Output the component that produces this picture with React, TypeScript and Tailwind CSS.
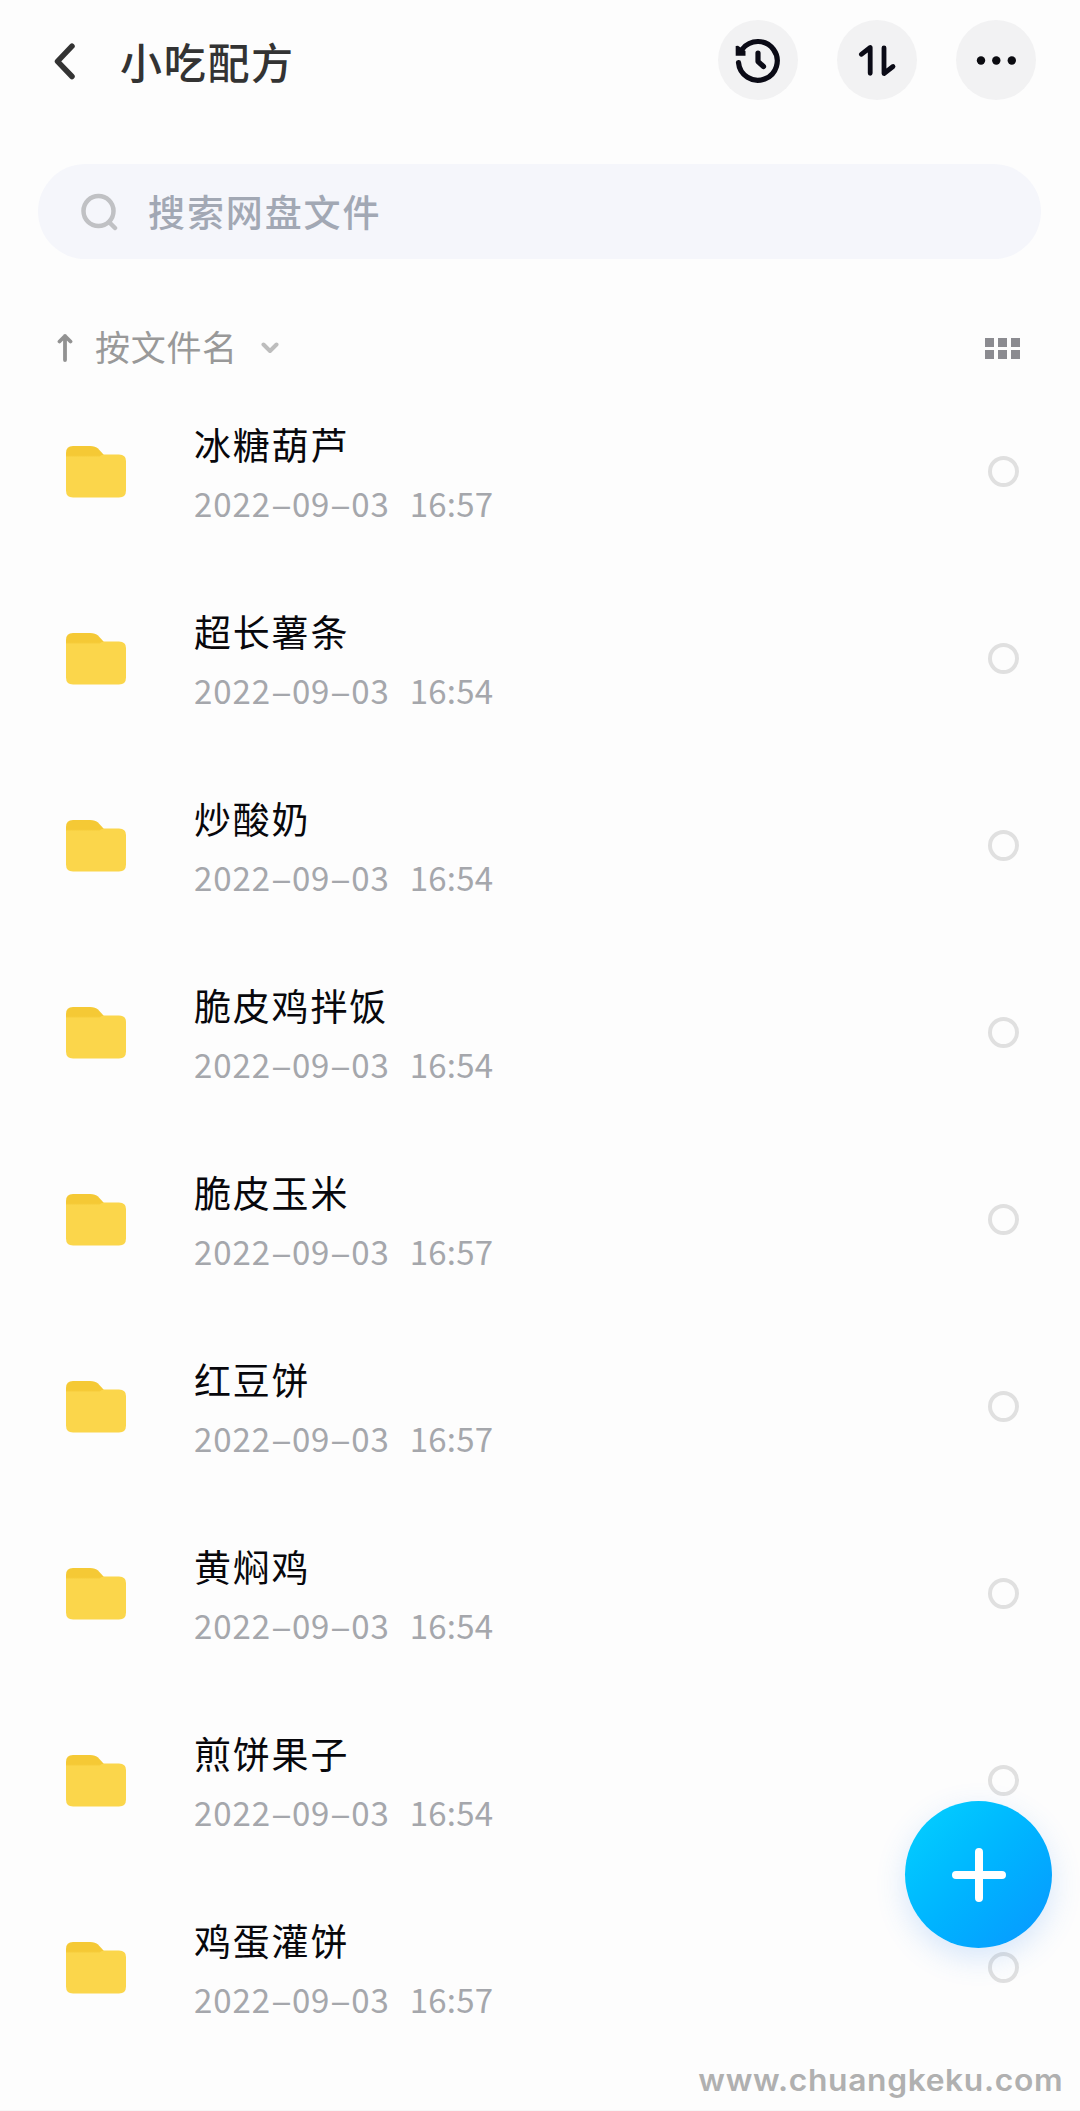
import { useState } from "react";

type FolderItem = {
    name: string;
    date: string;
    time: string;
};

const folders: FolderItem[] = [
    { name: "冰糖葫芦", date: "2022-09-03", time: "16:57" },
    { name: "超长薯条", date: "2022-09-03", time: "16:54" },
    { name: "炒酸奶", date: "2022-09-03", time: "16:54" },
    { name: "脆皮鸡拌饭", date: "2022-09-03", time: "16:54" },
    { name: "脆皮玉米", date: "2022-09-03", time: "16:57" },
    { name: "红豆饼", date: "2022-09-03", time: "16:57" },
    { name: "黄焖鸡", date: "2022-09-03", time: "16:54" },
    { name: "煎饼果子", date: "2022-09-03", time: "16:54" },
    { name: "鸡蛋灌饼", date: "2022-09-03", time: "16:57" },
];

function HistoryIcon() {
    return (
        <svg width="80" height="80" viewBox="0 0 80 80" fill="none" stroke="#0b0b16" strokeWidth="5.2" strokeLinecap="round" strokeLinejoin="round">
            <path d="M20.500 42.500A19.400 19.400 0 1 0 24.500 29" />
            <path d="M17.700 26L20 25.700L27.500 31V35.700H17.700z" fill="#0b0b16" stroke="none" />
            <path d="M40 33v8.500l5.500 5" />
        </svg>
    );
}

function TransferIcon() {
    return (
        <svg width="80" height="80" viewBox="0 0 80 80" fill="none" stroke="#0b0b16" strokeWidth="4.8" strokeLinecap="round" strokeLinejoin="round">
            <path d="M24.300 34.300L33.200 27.500V53.300" />
            <path d="M47 27.800V53.500L56 46.500" />
        </svg>
    );
}

function MoreIcon() {
    return (
        <svg width="80" height="80" viewBox="0 0 80 80" fill="#0b0b10">
            <circle cx="25" cy="40.5" r="4.2" />
            <circle cx="40.3" cy="40.5" r="4.2" />
            <circle cx="55.8" cy="40.5" r="4.2" />
        </svg>
    );
}

function FolderIcon() {
    return (
        <svg width="60" height="52" viewBox="0 0 60 52" className="shrink-0">
            <defs>
                <linearGradient id="folder-front" x1="0" y1="0" x2="0" y2="1">
                    <stop offset="0.03" stopColor="#f5c935" />
                    <stop offset="0.2" stopColor="#fbd64b" />
                </linearGradient>
            </defs>
            <path d="M0 7Q0 0 7 0H24Q29.500 0 32 2.500L38 9V22H0z" fill="#f5c935" />
            <path d="M0 9H38V20H0z" fill="url(#folder-front)" />
            <path d="M0 14H28Q31.500 14 33 11.500Q35 8.500 38 8.500H53Q60 8.500 60 15V44.500Q60 51.500 53 51.500H7Q0 51.500 0 44.500z" fill="#fbd64b" />
        </svg>
    );
}

// The dash is stretched so that it is as wide as a digit
function DateText({ date }: { date: string }) {
    return (
        <>
            {date.split("-").map((part, i) => (
                <span key={i}>
                    {i > 0 && <span className="inline-block w-[21px] origin-center scale-x-[2] text-center tracking-normal">-</span>}
                    {part}
                </span>
            ))}
        </>
    );
}

function FolderRow({ item, selected, onSelect }: { item: FolderItem; selected: boolean; onSelect: () => void }) {
    return (
        <li className="flex h-[187px] items-center pr-[61px] pl-[66px]">
            <FolderIcon />
            <div className="ml-[68px] flex grow flex-col">
                <h2 className="h-[58px] text-[37px] leading-[60px] tracking-[1.800px] text-[#08080c]">{item.name}</h2>
                <p className="flex h-[58px] text-[33px] leading-[62px] text-[#a5a7ac]">
                    <span className="tracking-[0.900px]"><DateText date={item.date} /></span>
                    <span className="ml-[20px] tracking-[0.200px]">{item.time}</span>
                </p>
            </div>
            <button
                aria-label={item.name}
                onClick={onSelect}
                className={`size-[31px] rounded-full border-4 ${selected ? "border-[#09aaff]" : "border-[#e0e0e0]"}`}
            />
        </li>
    );
}

export default function App() {
    const [selected, setSelected] = useState<string[]>([]);

    const toggle = (name: string) => {
        setSelected(selected.includes(name) ? selected.filter((n) => n !== name) : [...selected, name]);
    };

    return (
        <div className="relative flex h-[2111px] w-[1080px] flex-col overflow-hidden bg-[#fdfdfd] font-['Noto_Sans_CJK_SC',sans-serif]">
            {/* Top bar */}
            <header className="flex h-[164px] items-start pt-5 pr-[44px] pl-[54px]">
                <svg width="22" height="80" viewBox="0 0 22 80" fill="none" stroke="#333333" strokeWidth="5.5" strokeLinecap="round" strokeLinejoin="round">
                    <path d="M18 26.200L3.500 41.300L18 56.500" />
                </svg>
                <h1 className="ml-[44px] grow text-[42px] leading-[82px] font-medium tracking-[1.700px] text-[#333333]">小吃配方</h1>
                <div className="flex gap-[39px]">
                    <button className="size-20 rounded-full bg-[#f2f2f3]"><HistoryIcon /></button>
                    <button className="size-20 rounded-full bg-[#f2f2f3]"><TransferIcon /></button>
                    <button className="size-20 rounded-full bg-[#f2f2f3]"><MoreIcon /></button>
                </div>
            </header>

            {/* Search */}
            <div className="mr-[39px] ml-[38px] flex h-[95px] items-center rounded-full bg-[#f5f6fb] pl-[43px]">
                <svg width="38" height="38" viewBox="0 0 38 38" fill="none" stroke="#c0c1c4" strokeWidth="4.5" strokeLinecap="round">
                    <circle cx="17.500" cy="18" r="15" />
                    <path d="M28.500 29.500L34 35" />
                </svg>
                <span className="ml-[29px] text-[37px] leading-[95px] font-medium tracking-[1.900px] text-[#a2a8b4]">搜索网盘文件</span>
            </div>

            {/* Sort order */}
            <div className="flex h-[119px] items-center pt-[59px] pr-[60px] pl-[57px]">
                <svg width="16" height="30" viewBox="0 0 16 30" fill="none" stroke="#929292" strokeWidth="3.8" strokeLinecap="round" strokeLinejoin="round">
                    <path d="M8 27V3M2.500 8.500L8 3l5.500 5.500" />
                </svg>
                <span className="-mt-1 ml-[22px] text-[35px] leading-[60px] tracking-[0.700px] text-[#999999]">按文件名</span>
                <svg width="18" height="12" viewBox="0 0 18 12" fill="none" stroke="#bdbdbd" strokeWidth="4" strokeLinecap="round" strokeLinejoin="round" className="ml-[23px]">
                    <path d="M2.500 2.500l6.500 6.500 6.500-6.500" />
                </svg>
                <div className="ml-auto grid grid-cols-3 gap-x-[4px] gap-y-[3px]">
                    {[0, 1, 2, 3, 4, 5].map((n) => (
                        <span key={n} className="size-[9px] bg-[#8b8b90]" />
                    ))}
                </div>
            </div>

            <ul className="flex flex-col">
                {folders.map((item) => (
                    <FolderRow key={item.name} item={item} selected={selected.includes(item.name)} onSelect={() => toggle(item.name)} />
                ))}
            </ul>

            <footer className="flex grow items-start justify-end border-b border-[#f6f6f6] pt-1 pr-[17px]">
                <span className="origin-right scale-x-[1.060] font-['Inter'] text-[30px] leading-none font-semibold tracking-[0.600px] text-[#b0b0b0]">www.chuangkeku.com</span>
            </footer>

            {/* Floating add button */}
            <button
                aria-label="add"
                className="absolute top-[1801px] left-[905px] flex size-[147px] items-center justify-center rounded-full bg-linear-to-br from-[#04ccff] from-10% to-[#089cff] to-90% shadow-[0_10px_30px_rgba(60,140,240,0.2)]"
            >
                <svg width="56" height="56" viewBox="0 0 56 56" stroke="#ffffff" strokeWidth="8" strokeLinecap="round">
                    <path d="M28 5V51M5 28H51" />
                </svg>
            </button>
        </div>
    );
}
